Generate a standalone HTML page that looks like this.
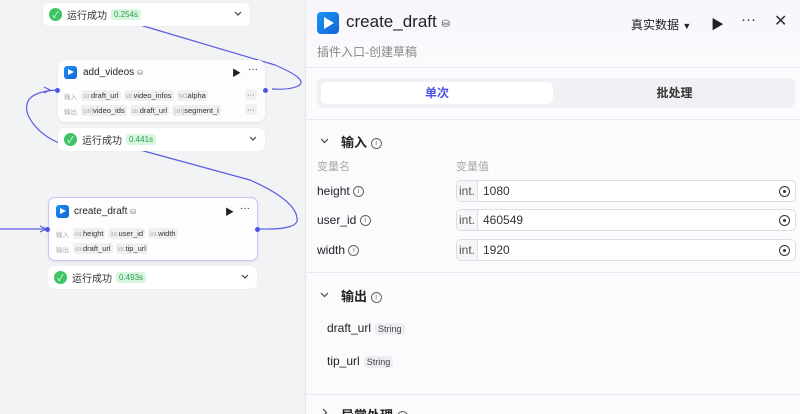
<!DOCTYPE html>
<html><head><meta charset="utf-8"><style>
*{box-sizing:border-box;margin:0;padding:0}
html,body{width:800px;height:414px;overflow:hidden}
body{background:#f2f3f5;font-family:"Liberation Sans","Noto Sans CJK SC",sans-serif;position:relative;color:#1d1f24}
.abs{position:absolute}
.status{position:absolute;background:#fff;border-radius:6px;height:23px;display:flex;align-items:center;padding-left:6px;font-size:10px;color:#333;box-shadow:0 0 1px rgba(0,0,0,.1)}
.chk{width:13px;height:13px;border-radius:50%;background:#3ec464;color:#fff;font-size:9px;display:flex;align-items:center;justify-content:center;margin-right:5px}
.tm{background:#d8f5e0;color:#2a9d4c;font-size:8px;padding:1px 3px;border-radius:3px;margin-left:4px}
.car{position:absolute;right:8px;top:8px}
.node{position:absolute;background:#fdfcff;border-radius:7px;box-shadow:0 1px 3px rgba(0,0,0,.08)}
.ic{position:absolute;width:13px;height:13px;border-radius:3px;background:linear-gradient(135deg,#1a8ff0,#1565d8)}
.ic:after{content:"";position:absolute;left:4px;top:3px;border-left:6px solid #fff;border-top:3.5px solid transparent;border-bottom:3.5px solid transparent}
.nt{position:absolute;font-size:10px;color:#222}
.tag{display:inline-block;background:#f0f0f3;border-radius:3px;font-size:7.5px;padding:1px 2px;margin-right:3px;color:#333}
.tag i{font-style:normal;color:#aaa;font-size:6px}
.lbl{font-size:6.5px;color:#aaa;margin-right:4px}
.row{position:absolute;display:flex;align-items:center;white-space:nowrap;overflow:hidden}
.dot{position:absolute;width:5px;height:5px;border-radius:50%;background:#4d53e8}
.panel{position:absolute;left:305px;top:0;width:495px;height:414px;background:#fbfbfd;border-left:1px solid #e6e6ea;overflow:hidden}
.hr{position:absolute;left:0;right:0;height:1px;background:#e8e8ee}
.info{display:inline-block;width:11px;height:11px;border:1px solid #666;border-radius:50%;font-size:7px;text-align:center;line-height:9px;color:#666;vertical-align:middle;font-weight:normal}
.inp{position:absolute;left:150px;width:340px;height:22px;border:1px solid #dcdce2;border-radius:5px;background:#fff;display:flex;align-items:center;font-size:12px;color:#333}
.inp b{font-weight:normal;width:21px;height:100%;border-right:1px solid #e0e0e6;background:#f6f6f8;display:flex;align-items:center;justify-content:center;color:#555;border-radius:5px 0 0 5px}
.inp span{margin-left:5px}
.inp em{position:absolute;right:5px;top:5px;width:11px;height:11px;border:1.3px solid #333;border-radius:50%}
.inp em:after{content:"";position:absolute;left:2.6px;top:2.6px;width:3px;height:3px;border-radius:50%;background:#333}
.vn{position:absolute;left:21px;font-size:12px;color:#222}
.str{background:#eeeef2;font-size:9px;padding:1px 3px;border-radius:3px;margin-left:4px;color:#444}
</style></head><body>
<svg class="abs" style="left:0;top:0" width="305" height="414">
<g fill="none" stroke="#5b5ee0" stroke-width="1.2">
<path d="M140 25 L275 65 Q310 80 298 86 Q290 90 272 89"/>
<path d="M57 90 Q20 92 28 115 Q40 140 75 148"/>
<path d="M140 150 L250 180 Q295 200 297 218 Q300 230 260 229"/>
<path d="M0 229 L46 229"/>
</g>
<path d="M40 226 L46 229 L40 232" fill="none" stroke="#5b5ee0" stroke-width="1.2"/>
<path d="M44 87 L50 90 L44 93" fill="none" stroke="#5b5ee0" stroke-width="1.2"/>
</svg>

<div class="status" style="left:43px;top:3px;width:207px"><div class="chk">✓</div>运行成功<span class="tm">0.254s</span><svg class="car" width="8" height="6"><path d="M1 1L4 4L7 1" fill="none" stroke="#444" stroke-width="1.2"/></svg></div>

<div class="node" style="left:58px;top:60px;width:207px;height:62px">
<div class="ic" style="left:6px;top:6px"></div>
<div class="nt" style="left:25px;top:7px">add_videos <span style="font-size:7px;color:#666">⛁</span></div>
<div class="nt" style="left:174px;top:6px;font-size:9px">▶</div><div class="nt" style="left:190px;top:4px">···</div>
<div class="row" style="left:6px;top:30px;width:178px"><span class="lbl">输入</span><span class="tag"><i>str.</i>draft_url</span><span class="tag"><i>str.</i>video_infos</span><span class="tag"><i>NO</i>alpha</span></div>
<div class="row" style="left:6px;top:45px;width:178px"><span class="lbl">输出</span><span class="tag"><i>[str]</i>video_ids</span><span class="tag"><i>str.</i>draft_url</span><span class="tag"><i>[str]</i>segment_i</span></div>
<div class="tag abs" style="left:187px;top:29px">···</div><div class="tag abs" style="left:187px;top:44px">···</div>
</div>
<div class="dot" style="left:55px;top:88px"></div><div class="dot" style="left:263px;top:88px"></div>
<div class="status" style="left:58px;top:128px;width:207px"><div class="chk">✓</div>运行成功<span class="tm">0.441s</span><svg class="car" width="8" height="6"><path d="M1 1L4 4L7 1" fill="none" stroke="#444" stroke-width="1.2"/></svg></div>

<div class="node" style="left:48px;top:197px;width:210px;height:64px;border:1px solid #c8c6f5">
<div class="ic" style="left:7px;top:7px"></div>
<div class="nt" style="left:25px;top:8px">create_draft <span style="font-size:7px;color:#666">⛁</span></div>
<div class="nt" style="left:176px;top:7px;font-size:9px">▶</div><div class="nt" style="left:191px;top:5px">···</div>
<div class="row" style="left:7px;top:30px"><span class="lbl">输入</span><span class="tag"><i>int.</i>height</span><span class="tag"><i>int.</i>user_id</span><span class="tag"><i>int.</i>width</span></div>
<div class="row" style="left:7px;top:45px"><span class="lbl">输出</span><span class="tag"><i>str.</i>draft_url</span><span class="tag"><i>str.</i>tip_url</span></div>
</div>
<div class="dot" style="left:45px;top:227px"></div><div class="dot" style="left:255px;top:227px"></div>
<div class="status" style="left:48px;top:266px;width:209px"><div class="chk">✓</div>运行成功<span class="tm">0.493s</span><svg class="car" width="8" height="6"><path d="M1 1L4 4L7 1" fill="none" stroke="#444" stroke-width="1.2"/></svg></div>

<div class="panel">
<div class="abs" style="left:0;top:0;width:495px;height:67px;background:linear-gradient(180deg,#f8f4fb,#fbfbfd)"></div>
<div class="abs" style="left:11px;top:12px;width:22px;height:22px;border-radius:4px;background:linear-gradient(135deg,#1b95f5,#1463d6)"><div style="position:absolute;left:7px;top:5px;border-left:10px solid #fff;border-top:6px solid transparent;border-bottom:6px solid transparent"></div></div>
<div class="abs" style="left:40px;top:12px;font-size:17px;color:#222">create_draft <span style="font-size:10px;color:#444">⛁</span></div>
<div class="abs" style="left:325px;top:16px;font-size:12px;color:#222">真实数据 <span style="font-size:9px">▼</span></div>
<div class="abs" style="left:405px;top:14px;font-size:13px">▶</div>
<div class="abs" style="left:435px;top:11px;font-size:15px;color:#333">···</div>
<div class="abs" style="left:468px;top:11px;font-size:16px;color:#333">✕</div>
<div class="abs" style="left:11px;top:43px;font-size:12px;color:#888">插件入口-创建草稿</div>
<div class="hr" style="top:67px"></div>
<div class="abs" style="left:11px;top:78px;width:478px;height:30px;background:#f1f1f5;border-radius:7px"></div>
<div class="abs" style="left:15px;top:82px;width:232px;height:22px;background:#fff;border-radius:6px;text-align:center;font-size:12px;line-height:22px;color:#4d53e8;font-weight:bold">单次</div>
<div class="abs" style="left:252px;top:82px;width:233px;height:22px;text-align:center;font-size:12px;line-height:22px;color:#333;font-weight:bold">批处理</div>
<div class="hr" style="top:119px"></div>
<svg class="abs" style="left:14px;top:138px" width="9" height="6"><path d="M1 1L4.5 4.5L8 1" fill="none" stroke="#444" stroke-width="1.2"/></svg>
<div class="abs" style="left:35px;top:132px;font-size:13px;font-weight:bold;color:#222">输入 <span class="info">i</span></div>
<div class="abs" style="left:11px;top:158px;font-size:11px;color:#aaa">变量名</div>
<div class="abs" style="left:150px;top:158px;font-size:11px;color:#aaa">变量值</div>
<div class="abs" style="left:11px;top:184px;font-size:12px">height <span class="info">i</span></div>
<div class="inp" style="top:180px"><b>int.</b><span>1080</span><em></em></div>
<div class="abs" style="left:11px;top:213px;font-size:12px">user_id <span class="info">i</span></div>
<div class="inp" style="top:209px"><b>int.</b><span>460549</span><em></em></div>
<div class="abs" style="left:11px;top:243px;font-size:12px">width <span class="info">i</span></div>
<div class="inp" style="top:239px"><b>int.</b><span>1920</span><em></em></div>
<div class="hr" style="top:272px"></div>
<svg class="abs" style="left:14px;top:292px" width="9" height="6"><path d="M1 1L4.5 4.5L8 1" fill="none" stroke="#444" stroke-width="1.2"/></svg>
<div class="abs" style="left:35px;top:286px;font-size:13px;font-weight:bold;color:#222">输出 <span class="info">i</span></div>
<div class="vn" style="top:321px">draft_url<span class="str">String</span></div>
<div class="vn" style="top:354px">tip_url<span class="str">String</span></div>
<div class="hr" style="top:394px"></div>
<svg class="abs" style="left:16px;top:408px" width="6" height="9"><path d="M1 1L4.5 4.5L1 8" fill="none" stroke="#444" stroke-width="1.2"/></svg>
<div class="abs" style="left:35px;top:405px;font-size:13px;font-weight:bold;color:#222">异常处理 <span class="info">i</span></div>
</div>
</body></html>
